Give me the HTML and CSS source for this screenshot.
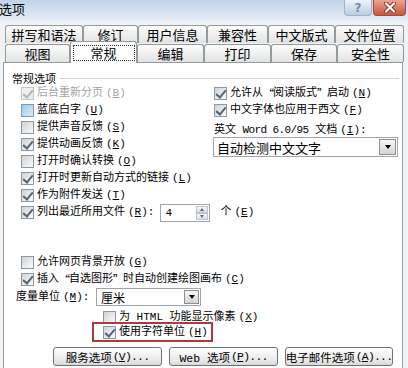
FILE: index.html
```html
<!DOCTYPE html>
<html lang="zh-CN">
<head>
<meta charset="utf-8">
<title>选项</title>
<link rel="stylesheet" href="styles.css">
</head>
<body>
<div class="dlg">
  <div class="titlebar">
    <span class="title">选项</span>
    <span class="tb-btn help">?</span>
    <span class="tb-btn close">
      <svg width="14" height="11" viewBox="0 0 14 11">
        <path d="M3 1.5 L11 9.5 M11 1.5 L3 9.5" stroke="#8a3526" stroke-width="4" stroke-linecap="round"/>
        <path d="M3 1.5 L11 9.5 M11 1.5 L3 9.5" stroke="#ffffff" stroke-width="2.2" stroke-linecap="round"/>
      </svg>
    </span>
  </div>

  <div class="tabs">
    <div class="tabrow back">
      <div class="tab">拼写和语法</div>
      <div class="tab">修订</div>
      <div class="tab">用户信息</div>
      <div class="tab">兼容性</div>
      <div class="tab">中文版式</div>
      <div class="tab">文件位置</div>
    </div>
    <div class="tabrow front">
      <div class="tab">视图</div>
      <div class="tab sel"><span class="focus">常规</span></div>
      <div class="tab">编辑</div>
      <div class="tab">打印</div>
      <div class="tab">保存</div>
      <div class="tab">安全性</div>
    </div>
  </div>

  <div class="panel">
    <div class="grp">常规选项</div>
    <div class="top">
      <div class="col left">
        <div class="row dis"><span class="cb on"></span>后台重新分页<span class="ak">(<u>B</u>)</span></div>
        <div class="row"><span class="cb blue"></span>蓝底白字<span class="ak">(<u>U</u>)</span></div>
        <div class="row"><span class="cb"></span>提供声音反馈<span class="ak">(<u>S</u>)</span></div>
        <div class="row"><span class="cb on"></span>提供动画反馈<span class="ak">(<u>K</u>)</span></div>
        <div class="row"><span class="cb"></span>打开时确认转换<span class="ak">(<u>O</u>)</span></div>
        <div class="row"><span class="cb on"></span>打开时更新自动方式的链接<span class="ak">(<u>L</u>)</span></div>
        <div class="row"><span class="cb on"></span>作为附件发送<span class="ak">(<u>T</u>)</span></div>
        <div class="row"><span class="cb on"></span>列出最近所用文件<span class="ak">(<u>R</u>):</span>
          <span class="spin"><span class="spin-val">4</span><span class="spin-btns"><i class="up"></i><i class="dn"></i></span></span>
          <span class="unit">个<span class="ak">(<u>E</u>)</span></span>
        </div>
      </div>
      <div class="col right">
        <div class="row"><span class="cb on"></span>允许从<span class="q">“</span>阅读版式<span class="q">”</span>启动<span class="ak">(<u>N</u>)</span></div>
        <div class="row"><span class="cb on"></span>中文字体也应用于西文<span class="ak">(<u>F</u>)</span></div>
        <div class="lbl">英文 <span class="lat">Word 6.0/95</span> 文档<span class="ak">(<u>I</u>):</span></div>
        <div class="combo big"><span class="combo-val">自动检测中文文字</span><span class="combo-btn"></span></div>
      </div>
    </div>

    <div class="lower">
      <div class="row ind"><span class="cb"></span>允许网页背景开放<span class="ak">(<u>G</u>)</span></div>
      <div class="row ind"><span class="cb on"></span>插入<span class="q">“</span>自选图形<span class="q">”</span>时自动创建绘图画布<span class="ak">(<u>C</u>)</span></div>
      <div class="measure">
        <span class="mlbl">度量单位<span class="ak">(<u>M</u>):</span></span>
        <div class="combo small"><span class="combo-val">厘米</span><span class="combo-btn"></span></div>
      </div>
      <div class="row sub"><span class="cb"></span>为&nbsp;HTML&nbsp;功能显示像素<span class="ak">(<u>X</u>)</span></div>
      <div class="hl"><div class="row"><span class="cb on"></span>使用字符单位<span class="ak">(<u>H</u>)</span></div></div>
      <div class="buttons">
        <span class="btn b1">服务选项<span class="ak">(<u>V</u>)...</span></span>
        <span class="btn b2">Web&nbsp;选项<span class="ak">(<u>P</u>)...</span></span>
        <span class="btn b3">电子邮件选项<span class="ak">(<u>A</u>)...</span></span>
      </div>
    </div>
  </div>
</div>
</body>
</html>
```

FILE: styles.css
```css
* { box-sizing: border-box; }
html, body { margin: 0; padding: 0; }
body {
  width: 408px;
  height: 368px;
  overflow: hidden;
  background: #f1f2f4;
  color: #000;
  font-family: "Liberation Mono", "Noto Sans CJK SC", monospace;
  font-size: 11px;
}
.dlg { width: 408px; }

/* title bar */
.titlebar {
  height: 22px;
  display: flex;
  align-items: flex-start;
  background: linear-gradient(#bfd3ea, #e9eff6);
}
.title {
  font-family: "Noto Sans CJK SC", sans-serif;
  font-size: 13px;
  line-height: 17px;
  margin-left: -1px;
}
.tb-btn {
  height: 16px;
  display: flex;
  align-items: center;
  justify-content: center;
  border: 1px solid;
  border-top: none;
  border-radius: 0 0 4px 4px;
}
.help {
  margin-left: auto;
  width: 28px;
  border-color: #9fb2c9;
  background: linear-gradient(#eef3f9, #bccde2);
  color: #7487a3;
  font-family: "DejaVu Sans", sans-serif;
  font-weight: bold;
  font-size: 12px;
}
.close {
  width: 33px;
  margin-left: 1px;
  margin-right: 2px;
  border-color: #a6493a;
  background: linear-gradient(#eba595, #c9553f);
}

/* tabs */
.tabs { padding: 3px 0 0 5px; }
.tabrow {
  display: grid;
  width: 399px;
  grid-template-rows: 18px;
}
.tabrow.back { grid-template-columns: 78px 55px 69px 61px 67px 69px; }
.tabrow.front {
  grid-template-columns: 65px 67px 67px 67px 66px 67px;
  margin-top: 1px;
  position: relative;
  z-index: 1;
}
.tab {
  border: 1px solid #919b9c;
  border-bottom: none;
  border-radius: 3px 3px 0 0;
  background: linear-gradient(#fdfdfd, #e2e2e2);
  font-family: "Noto Sans CJK SC", sans-serif;
  font-size: 13px;
  line-height: 14px;
  display: flex;
  align-items: center;
  justify-content: center;
}
.tab.sel {
  align-self: start;
  height: 22px;
  margin-top: -3px;
  background: #fff;
}
.focus {
  width: 60px;
  height: 14px;
  outline: 1px dotted #333;
  display: flex;
  align-items: center;
  justify-content: center;
}

/* panel */
.panel {
  margin-left: 3px;
  width: 400px;
  height: 320px;
  border: 1px solid #919b9c;
  background: #fff;
  padding: 9px 3px 0 8px;
}
.grp {
  display: flex;
  align-items: center;
  height: 13px;
  line-height: 13px;
  font-family: "Noto Sans CJK SC", sans-serif;
}
.grp::after {
  content: "";
  flex: 1;
  height: 1px;
  margin-left: 4px;
  background: #d4d4d8;
}

.top {
  display: grid;
  grid-template-columns: 202px 184px;
}
.col { display: flex; flex-direction: column; }
.col.left { padding-left: 9px; }
.row {
  height: 17px;
  display: flex;
  align-items: center;
  white-space: nowrap;
  line-height: 13px;
}
.row > * { flex: none; }
.row.dis { color: #a3a3a3; }
.ak { margin-left: 3px; }
.lat { letter-spacing: -0.6px; }
.q { font-family: "Noto Sans CJK SC", sans-serif; letter-spacing: -1px; }

/* checkbox */
.cb {
  flex: none;
  position: relative;
  width: 13px;
  height: 13px;
  margin-right: 3px;
  border: 1px solid #8d98a5;
  background: linear-gradient(135deg, #d2d2d2, #fbfbfb);
}
.cb.blue {
  border-color: #6f9cc6;
  background: linear-gradient(135deg, #a5c9ea, #d9eaf8);
}
.cb.on::after {
  content: "";
  position: absolute;
  left: 3px;
  top: 0px;
  width: 4px;
  height: 8px;
  border: solid #56667a;
  border-width: 0 2px 2px 0;
  transform: rotate(40deg);
}
.row.dis .cb { border-color: #c2c6cb; background: #efefef; }
.row.dis .cb.on::after { border-color: #b5b5b5; }

/* spinner */
.spin {
  display: flex;
  width: 50px;
  height: 18px;
  margin-left: 6px;
  border: 1px solid #9ea6ad;
  background: #fff;
}
.spin-val { flex: 1; padding-left: 4px; line-height: 16px; }
.spin-btns { width: 13px; display: flex; flex-direction: column; padding: 1px 1px 1px 0; }
.spin-btns i {
  flex: 1;
  display: flex;
  align-items: center;
  justify-content: center;
  border: 1px solid #bcc4cc;
  background: linear-gradient(#f6f8fa, #d9dee4);
}
.spin-btns i::before {
  content: "";
  border-left: 2.5px solid transparent;
  border-right: 2.5px solid transparent;
}
.spin-btns .up::before { border-bottom: 3px solid #5c6b7c; }
.spin-btns .dn::before { border-top: 3px solid #5c6b7c; }
.unit { margin-left: 10px; }

/* right column */
.lbl {
  margin-top: 4px;
  height: 14px;
  line-height: 14px;
  white-space: nowrap;
}
.combo {
  display: flex;
  border: 1px solid #9ea6ad;
  background: #fff;
}
.combo.big { height: 20px; margin-left: -1px; }
.combo.small { height: 18px; }
.combo-val {
  flex: 1;
  padding-left: 3px;
  font-family: "Noto Sans CJK SC", sans-serif;
  display: flex;
  align-items: center;
}
.combo.big .combo-val { font-size: 13px; }
.combo.small .combo-val { font-size: 12px; padding-left: 4px; }
.combo-btn {
  width: 17px;
  margin: 1px;
  border: 1px solid #8f8f8f;
  background: linear-gradient(#f7f7f7, #d4d4d4);
  display: flex;
  align-items: center;
  justify-content: center;
}
.combo.small .combo-btn { width: 15px; }
.combo-btn::before {
  content: "";
  border-left: 3.5px solid transparent;
  border-right: 3.5px solid transparent;
  border-top: 4px solid #000;
}

/* lower block */
.lower { margin-top: 33px; }
.row.ind { padding-left: 9px; }
.measure {
  display: grid;
  grid-template-columns: 84px 105px;
  height: 18px;
  align-items: center;
}
.mlbl { padding-left: 4px; white-space: nowrap; line-height: 13px; }
.row.sub { margin-top: 4px; height: 15px; padding-left: 91px; }
.hl {
  position: relative;
  margin: -3px 0 0 80px;
  width: 121px;
  height: 20px;
  border: 2px solid #b3383b;
  padding-left: 9px;
}
.hl .row { height: 16px; }

.buttons {
  display: flex;
  gap: 7px;
  margin: 5px 0 0 41px;
}
.btn {
  flex: none;
  height: 19px;
  display: flex;
  align-items: center;
  justify-content: center;
  border: 1px solid #6f7277;
  border-radius: 3px;
  background: linear-gradient(#ffffff, #e6e6e6 80%, #d6d6d6);
  font-size: 11.5px;
  white-space: nowrap;
}
.btn .ak { margin-left: 1px; letter-spacing: -0.8px; }
.b1 { width: 109px; }
.b2 { width: 109px; }
.b3 { width: 108px; }
```
